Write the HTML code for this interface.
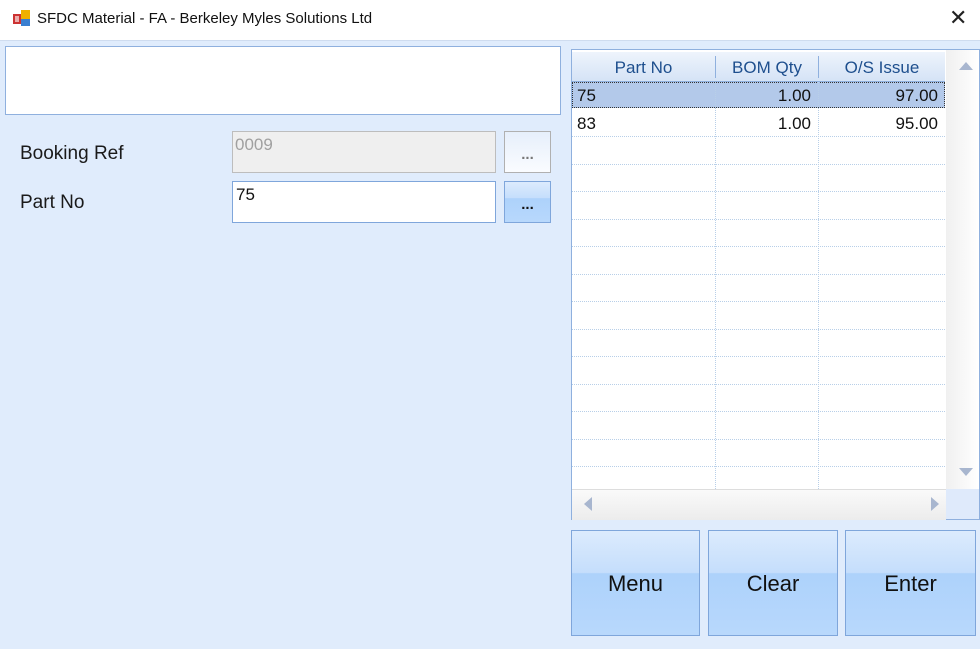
<!DOCTYPE html><html><head><style>
body{margin:0;width:980px;height:649px;background:#e0ecfc;font-family:"Liberation Sans",sans-serif;position:relative;overflow:hidden}
.a{position:absolute}
.title{left:0;top:0;width:980px;height:40px;background:#fff;border-bottom:1px solid #cfdcef}
.lbl{font-size:19px;color:#1a1a1a}
.btn{background:linear-gradient(#dcebfd,#c5defc 40%,#add2fb 41%,#b8d8fc);border:1px solid #7fa6db;box-sizing:border-box;font-size:22px;text-align:center;color:#111}
.hl{left:572px;width:373px;height:0;border-top:1px dotted #b8cfe8}
.vl{top:82px;height:407px;width:0;border-left:1px dotted #b8cfe8}
.c{font-size:17px;color:#111}
</style></head><body>
<div class="a title">
 <svg class="a" style="left:13px;top:10px" width="18" height="18"><rect x="0" y="4" width="8" height="10" fill="#c33"/><rect x="8" y="0" width="9" height="9" fill="#f0b000"/><rect x="8" y="9" width="9" height="7" fill="#3a7fd0"/><rect x="2" y="6" width="4" height="6" fill="#fff" opacity=".6"/></svg>
 <div class="a" style="left:37px;top:10px;font-size:15px;color:#111">SFDC Material - FA - Berkeley Myles Solutions Ltd</div>
 <div class="a" style="left:949px;top:5px;font-size:22px;color:#222">✕</div>
</div>
<div class="a" style="left:5px;top:46px;width:556px;height:69px;background:#fff;border:1px solid #8fb0de;box-sizing:border-box"></div>
<div class="a lbl" style="left:20px;top:143px">Booking Ref</div>
<div class="a lbl" style="left:20px;top:192px">Part No</div>
<div class="a" style="left:232px;top:131px;width:264px;height:42px;background:#efefef;border:1px solid #bdbdbd;color:#a0a0a0;font-size:17px;box-sizing:border-box;padding:3px 2px">0009</div>
<div class="a" style="left:232px;top:181px;width:264px;height:42px;background:#fff;border:1px solid #7fa6db;color:#111;font-size:17px;box-sizing:border-box;padding:3px 3px">75</div>
<div class="a" style="left:504px;top:131px;width:47px;height:42px;box-sizing:border-box;border:1px solid #b0b0b0;background:linear-gradient(#e6effb,#fafcff);text-align:center;font-size:15px;font-weight:bold;color:#777;line-height:46px">...</div>
<div class="a btn" style="left:504px;top:181px;width:47px;height:42px;font-size:15px;font-weight:bold;line-height:46px">...</div>
<!-- grid -->
<div class="a" style="left:571px;top:49px;width:409px;height:471px;background:#fff;border:1px solid #8fb0de;box-sizing:border-box"></div>
<div class="a" style="left:572px;top:52px;width:373px;height:29px;background:linear-gradient(#eef4fc,#d5e3f6);border-bottom:1px solid #8fb0de"></div>
<div class="a" style="left:715px;top:56px;height:22px;border-left:1px solid #8fb0de"></div>
<div class="a" style="left:818px;top:56px;height:22px;border-left:1px solid #8fb0de"></div>
<div class="a" style="left:572px;top:58px;width:143px;text-align:center;font-size:17px;color:#1e4f8e">Part No</div>
<div class="a" style="left:716px;top:58px;width:102px;text-align:center;font-size:17px;color:#1e4f8e">BOM Qty</div>
<div class="a" style="left:819px;top:58px;width:126px;text-align:center;font-size:17px;color:#1e4f8e">O/S Issue</div>
<div class="a" style="left:572px;top:82px;width:373px;height:26px;background:#b3c9ea;border:1px dotted #333;box-sizing:border-box"></div>
<div class="a vl" style="left:715px"></div><div class="a vl" style="left:818px"></div>
<div class="a hl" style="top:136px"></div><div class="a hl" style="top:164px"></div><div class="a hl" style="top:191px"></div><div class="a hl" style="top:219px"></div><div class="a hl" style="top:246px"></div><div class="a hl" style="top:274px"></div><div class="a hl" style="top:301px"></div><div class="a hl" style="top:329px"></div><div class="a hl" style="top:356px"></div><div class="a hl" style="top:384px"></div><div class="a hl" style="top:411px"></div><div class="a hl" style="top:439px"></div><div class="a hl" style="top:466px"></div>
<div class="a c" style="left:577px;top:86px">75</div><div class="a c" style="left:716px;top:86px;width:95px;text-align:right">1.00</div><div class="a c" style="left:819px;top:86px;width:119px;text-align:right">97.00</div>
<div class="a c" style="left:577px;top:114px">83</div><div class="a c" style="left:716px;top:114px;width:95px;text-align:right">1.00</div><div class="a c" style="left:819px;top:114px;width:119px;text-align:right">95.00</div>
<div class="a" style="left:946px;top:50px;width:33px;height:439px;background:linear-gradient(90deg,#f0f0f0,#fff)"></div>
<div class="a" style="left:959px;top:62px;border:7px solid transparent;border-bottom:8px solid #a8b6cf;border-top:0"></div>
<div class="a" style="left:959px;top:468px;border:7px solid transparent;border-top:8px solid #a8b6cf;border-bottom:0"></div>
<div class="a" style="left:572px;top:489px;width:374px;height:30px;background:linear-gradient(#fafafa,#ececec);border-top:1px solid #ddd"></div>
<div class="a" style="left:584px;top:497px;border:7px solid transparent;border-right:8px solid #a8b6cf;border-left:0"></div>
<div class="a" style="left:931px;top:497px;border:7px solid transparent;border-left:8px solid #a8b6cf;border-right:0"></div>
<div class="a" style="left:946px;top:489px;width:33px;height:30px;background:#dfeafb"></div>
<div class="a btn" style="left:571px;top:530px;width:129px;height:106px;line-height:106px">Menu</div>
<div class="a btn" style="left:708px;top:530px;width:130px;height:106px;line-height:106px">Clear</div>
<div class="a btn" style="left:845px;top:530px;width:131px;height:106px;line-height:106px">Enter</div>
</body></html>
